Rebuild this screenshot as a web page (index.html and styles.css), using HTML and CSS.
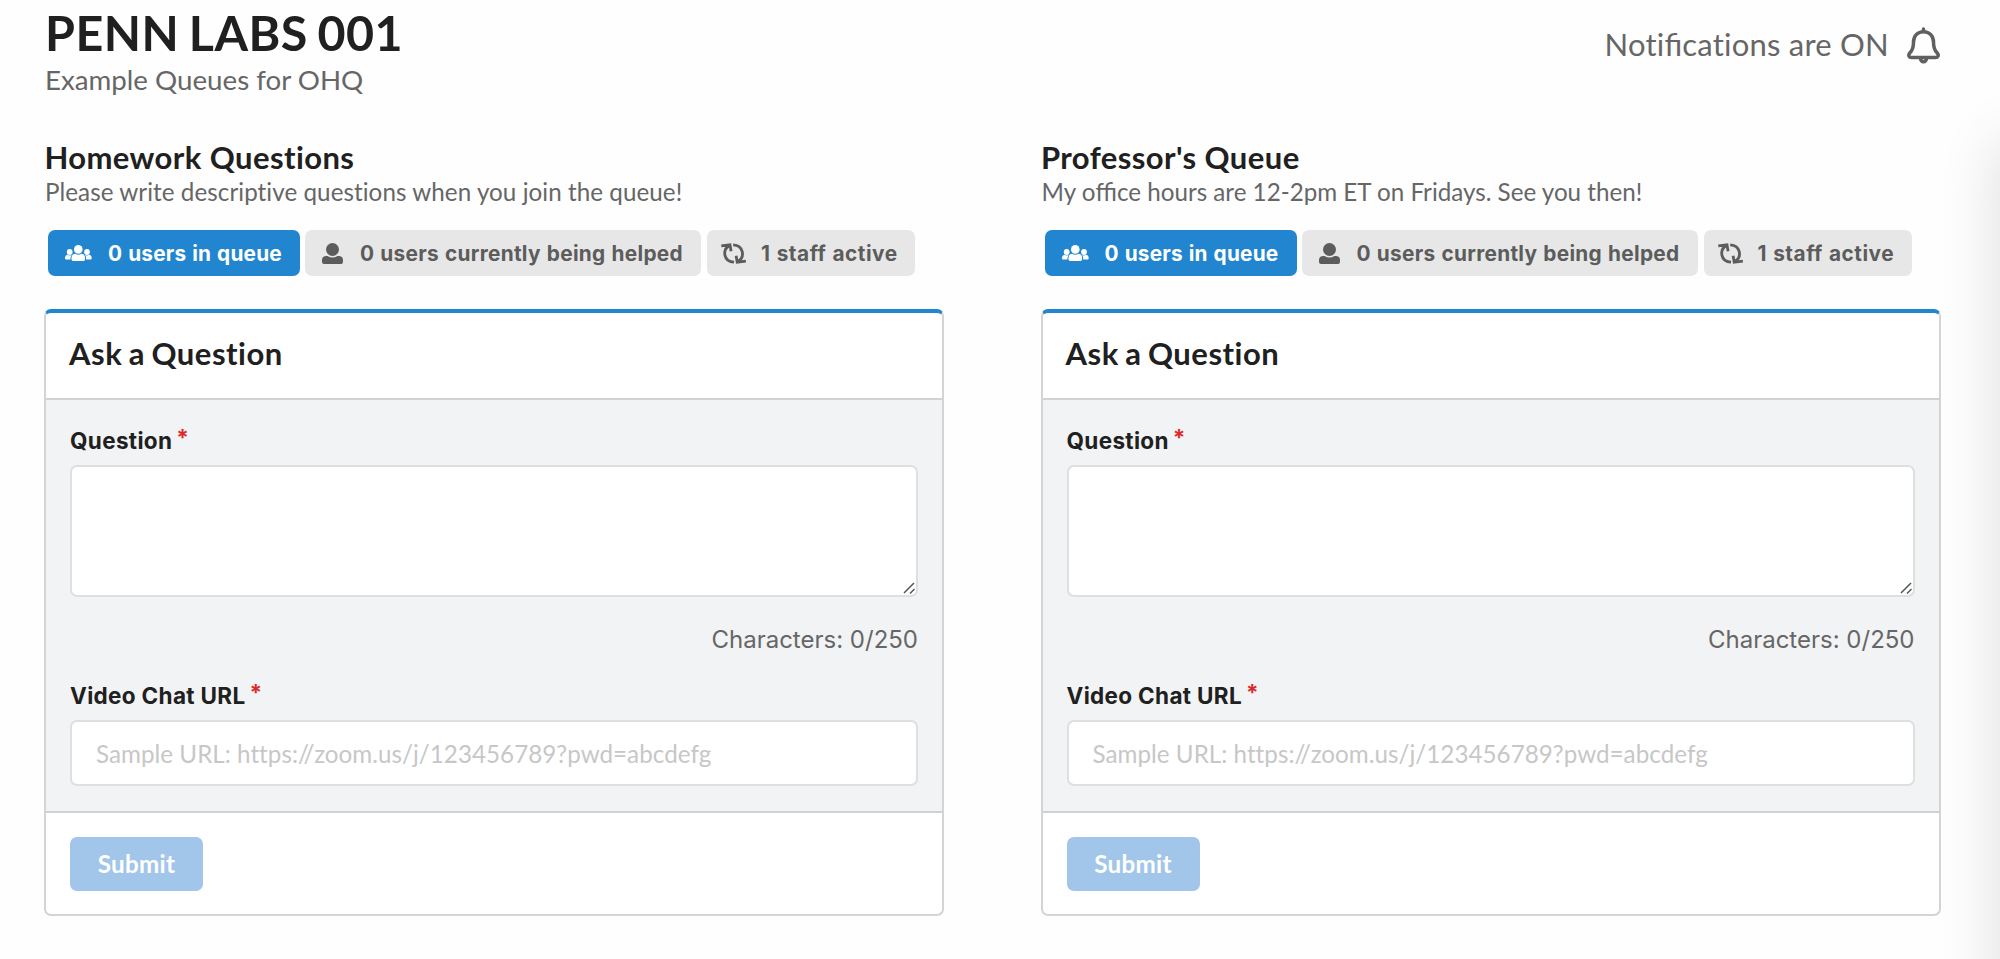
FILE: index.html
```html
<!DOCTYPE html>
<html lang="en">
<head>
<meta charset="utf-8">
<title>Penn Labs 001 - OHQ</title>
<link rel="stylesheet" href="styles.css">
</head>
<body>
<svg class="sprite" aria-hidden="true">
  <symbol id="i-users" viewBox="0 0 27 16">
    <circle cx="13.3" cy="4.4" r="4.3"/>
    <circle cx="4.7" cy="7" r="2.9"/><circle cx="22" cy="7" r="2.9"/>
    <path d="M6.500 14.200Q6.200 9 10.200 8.800Q13.300 10.600 16.400 8.800Q20.400 9 20.100 14.200Q20.100 16 18.500 16H8.100Q6.500 16 6.500 14.200Z"/>
    <path d="M0 13.400Q0 10.200 2.600 9.800Q4.700 11 6.600 10Q5.200 11.800 5.400 14.500H1.200Q0 14.500 0 13.400Z"/>
    <path d="M26.700 13.400Q26.700 10.200 24.100 9.800Q22 11 20.100 10Q21.500 11.800 21.200 14.500H25.500Q26.700 14.500 26.700 13.400Z"/>
  </symbol>
  <symbol id="i-user" viewBox="0 0 21 21">
    <circle cx="10.500" cy="6.500" r="6.500"/>
    <path d="M4.500 13H5.500Q10.500 16 15.500 13H16.500Q21 13.200 21 17V19Q21 21 19 21H2Q0 21 0 19V17Q0 13.200 4.500 13Z"/>
  </symbol>
  <symbol id="i-sync" viewBox="0 0 25 21">
    <path class="stroke" d="M.3 2.900 9 1.900 10.100 8.200M8 2.800C1.200 7 2.400 18.600 13 19.200"/>
    <path class="stroke" d="M24.900 18.100 16.200 19.100 15.100 12.800M17.200 18.200C24 14 22.800 2.400 12.200 1.800"/>
  </symbol>
</svg>
<main class="page">
  <header class="top">
    <div>
      <h1 class="course">PENN LABS 001</h1>
      <p class="subtitle">Example Queues for OHQ</p>
    </div>
    <div class="notify">
      <span class="notify-text">Noti<span class="lig">fi</span>cations are ON</span>
      <svg class="bell" viewBox="0 0 33 37">
        <path d="M16.500 4.700C10.400 4.700 6.500 9.200 6.500 15C6.500 21 5.300 23.400 3 25.700C.7 28.200 2 30.500 4.600 30.500H28.400C31 30.500 32.300 28.200 30 25.700C27.700 23.400 26.500 21 26.500 15C26.500 9.200 22.600 4.700 16.500 4.700ZM16.500 2V4M13.600 31.500A2.900 3.300 0 0 0 19.400 31.500"/>
      </svg>
    </div>
  </header>
  <div class="queues">
    <section class="queue">
      <h2 class="queue-name">Homework Questions</h2>
      <p class="queue-desc desc-a">Please write descriptive questions when you join the queue!</p>
      <div class="labels">
        <span class="label blue"><svg class="ic users"><use href="#i-users"/></svg><span>0 users in queue</span></span>
        <span class="label helped"><svg class="ic user"><use href="#i-user"/></svg><span>0 users currently being helped</span></span>
        <span class="label staff"><svg class="ic sync"><use href="#i-sync"/></svg><span>1 staff active</span></span>
      </div>
      <form class="card">
        <div class="card-head"><h3 class="card-title">Ask a Question</h3></div>
        <div class="card-body">
          <div class="field-label"><span>Question</span><span class="req">*</span></div>
          <div class="area"><svg class="grip" viewBox="0 0 12 12"><path d="M1 11 11 1M7 11.500 11.500 7"/></svg></div>
          <div class="count">Characters: 0/250</div>
          <div class="field-label"><span>Video Chat URL</span><span class="req">*</span></div>
          <input class="url" type="text" placeholder="Sample URL: https://zoom.us/j/123456789?pwd=abcdefg">
        </div>
        <div class="card-foot"><button class="submit" type="button">Submit</button></div>
      </form>
    </section>
    <section class="queue">
      <h2 class="queue-name">Professor's Queue</h2>
      <p class="queue-desc">My o<span class="lig">ffi</span>ce hours are 12-2pm ET on Fridays. See you then!</p>
      <div class="labels">
        <span class="label blue"><svg class="ic users"><use href="#i-users"/></svg><span>0 users in queue</span></span>
        <span class="label helped"><svg class="ic user"><use href="#i-user"/></svg><span>0 users currently being helped</span></span>
        <span class="label staff"><svg class="ic sync"><use href="#i-sync"/></svg><span>1 staff active</span></span>
      </div>
      <form class="card">
        <div class="card-head"><h3 class="card-title">Ask a Question</h3></div>
        <div class="card-body">
          <div class="field-label"><span>Question</span><span class="req">*</span></div>
          <div class="area"><svg class="grip" viewBox="0 0 12 12"><path d="M1 11 11 1M7 11.500 11.500 7"/></svg></div>
          <div class="count">Characters: 0/250</div>
          <div class="field-label"><span>Video Chat URL</span><span class="req">*</span></div>
          <input class="url" type="text" placeholder="Sample URL: https://zoom.us/j/123456789?pwd=abcdefg">
        </div>
        <div class="card-foot"><button class="submit" type="button">Submit</button></div>
      </form>
    </section>
  </div>
</main>
<div class="edge"><div class="edge-shadow"></div></div>
</body>
</html>
```
FILE: styles.css
```css
* { box-sizing: border-box; margin: 0; padding: 0; }
body {
  width: 2000px; height: 959px; overflow: hidden; position: relative;
  background: #fefefe; color: #202020;
  font-family: Lato, "Liberation Sans", sans-serif;
  font-variant-ligatures: none;
}
.lig { font-variant-ligatures: normal; letter-spacing: 0; }
.sprite { display: none; }
.page { padding: 3px 60px 0 44px; }
.top { display: flex; justify-content: space-between; height: 135px; padding-left: 1px; }
.course { font-size: 48.4px; line-height: 58px; font-weight: 700; white-space: nowrap; letter-spacing: .45px; word-spacing: -2.5px; }
.subtitle { font-size: 27.7px; line-height: 34px; margin-top: 2px; color: #666; white-space: nowrap; }
.notify { display: flex; align-items: flex-start; color: #666; }
.notify-text { font-size: 31px; line-height: 38px; margin: 22px 18px 0 0; white-space: nowrap; letter-spacing: .22px; }
.bell { width: 33px; height: 37px; margin-top: 24px; fill: none; stroke: #606060; stroke-width: 3.5; stroke-linecap: round; }
.queues { display: grid; grid-template-columns: 900px 900px; column-gap: 96.5px; }
.queue-name { font-size: 31px; line-height: 38px; font-weight: 700; white-space: nowrap; letter-spacing: .42px; padding-left: .4px; }
.queue-desc { font-size: 24.2px; line-height: 32px; color: #666; white-space: nowrap; padding-left: 1px; }
.desc-a { letter-spacing: .06px; }
.labels { display: flex; gap: 5px; margin: 22px 0 33px 4px; }
.label {
  display: flex; align-items: center; height: 46px; border-radius: 7px; width: 252px; padding-left: 17px;
  background: #e7e7e7; color: #5c5c5c; white-space: nowrap;
  font: 700 20.8px Inter, "Liberation Sans", sans-serif; letter-spacing: .3px; word-spacing: .8px;
}
.label.blue { background: #2185d0; color: #fff; letter-spacing: .2px; }
.label.helped { width: 396px; padding-left: 17px; }
.label.staff { width: 208px; padding-left: 14px; margin-left: 1px; letter-spacing: .5px; }
.ic { fill: currentColor; flex: none; }
.users { width: 27px; height: 16px; margin-right: 16px; }
.user { width: 21px; height: 21px; margin-right: 17px; }
.sync { width: 25px; height: 21px; margin-right: 15px; }
.stroke { fill: none; stroke: currentColor; stroke-width: 2.8; }
.card {
  border: 2px solid #d4d4d5; border-top: 4px solid #2185d0; border-radius: 7px;
  height: 607px; background: #fff; overflow: hidden;
}
.card-head { height: 87px; padding: 21px 0 0 23px; border-bottom: 2px solid #d2d2d3; }
.card-title { font-size: 31px; line-height: 38px; font-weight: 700; white-space: nowrap; letter-spacing: .5px; word-spacing: -1.5px; }
.card-body { height: 413px; padding: 27px 24px 0 24px; background: #f2f3f5; border-bottom: 2px solid #d0d1d2; }
.field-label { display: flex; height: 28px; font: 700 22.5px/28px Inter, "Liberation Sans", sans-serif; letter-spacing: .33px; }
.req { color: #db2828; margin: -3px 0 0 4px; }
.area { position: relative; height: 132px; margin-top: 10px; background: #fff; border: 2px solid #dedfe0; border-radius: 7px; }
.grip { position: absolute; right: 1px; bottom: 1px; width: 12px; height: 12px; fill: none; stroke: #555; stroke-width: 1.500; }
.count { margin-top: 28px; height: 30px; text-align: right; font: 400 24px/30px Inter, "Liberation Sans", sans-serif; color: #666; }
.count + .field-label { margin-top: 27px; }
.url {
  display: block; width: 100%; height: 66px; margin-top: 10px; padding: 0 24px;
  background: #fff; border: 2px solid #dedfe0; border-radius: 7px;
  font: 400 24.2px/30px Lato, "Liberation Sans", sans-serif; font-variant-ligatures: none; letter-spacing: .03px;
}
.url::placeholder { color: #c7c7c7; opacity: 1; }
.card-foot { padding: 24px 0 0 24px; }
.submit {
  display: block; width: 133px; height: 54px; border: 0; border-radius: 7px; color: #fff; background: #a2c6ea;
  font: 700 24.2px/30px Lato, "Liberation Sans", sans-serif; letter-spacing: .3px;
}
.edge { position: absolute; right: 0; top: 0; width: 90px; height: 959px; overflow: hidden; pointer-events: none; }
.edge-shadow { margin: 145px 0 0 90px; width: 60px; height: 1000px; box-shadow: 0 0 60px 4px rgba(0,0,0,.12); }
```
